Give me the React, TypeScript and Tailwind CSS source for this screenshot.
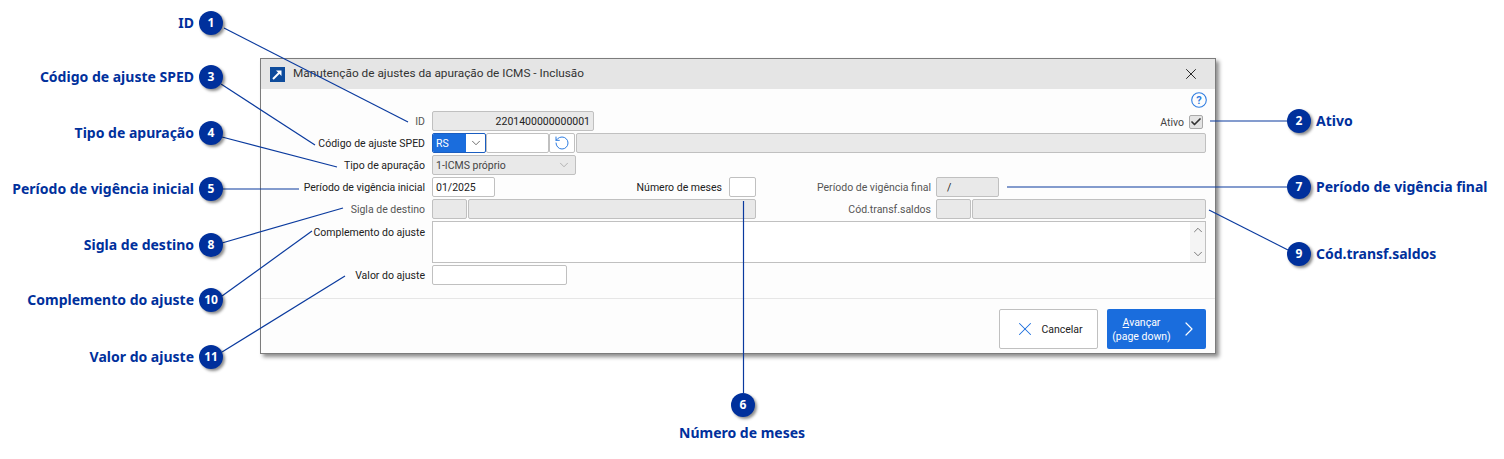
import React from "react";
import { ChevronDown, ChevronRight, ChevronUp, RotateCcw, X, Check } from "lucide-react";

// numbered callouts around the dialog
const callouts = [
  { n: 1, badge: "left-[199px] top-[11px]", text: "ID", label: "right-[1310px] top-[13px]" },
  { n: 3, badge: "left-[199px] top-[65px]", text: "Código de ajuste SPED", label: "right-[1310px] top-[67px]" },
  { n: 4, badge: "left-[199px] top-[121px]", text: "Tipo de apuração", label: "right-[1310px] top-[123px]" },
  { n: 5, badge: "left-[199px] top-[177px]", text: "Período de vigência inicial", label: "right-[1310px] top-[179px]" },
  { n: 8, badge: "left-[199px] top-[233px]", text: "Sigla de destino", label: "right-[1310px] top-[235px]" },
  { n: 10, badge: "left-[199px] top-[288px]", text: "Complemento do ajuste", label: "right-[1310px] top-[290px]" },
  { n: 11, badge: "left-[199px] top-[345px]", text: "Valor do ajuste", label: "right-[1310px] top-[347px]" },
  { n: 2, badge: "left-[1287px] top-[109px]", text: "Ativo", label: "left-[1316px] top-[111px]" },
  { n: 7, badge: "left-[1287px] top-[175px]", text: "Período de vigência final", label: "left-[1316px] top-[177px]" },
  { n: 9, badge: "left-[1287px] top-[242px]", text: "Cód.transf.saldos", label: "left-[1316px] top-[244px]" },
  { n: 6, badge: "left-[731px] top-[393px]", text: "Número de meses", label: "left-[679px] top-[423px]" },
];

const lines = [
  [224, 28, 408, 122],
  [221, 84, 315, 145],
  [222, 137, 337, 167],
  [222, 189, 299, 189],
  [222, 243, 343, 208],
  [222, 296, 312, 231],
  [222, 352, 345, 276],
  [1210, 121, 1287, 121],
  [1007, 187, 1287, 187],
  [1209, 210, 1288, 250],
  [743.5, 201, 743.5, 393],
];

const Label = ({ children, muted, className = "w-[160px] pt-[2px]" }: { children: React.ReactNode; muted?: boolean; className?: string }) => (
  <span className={`${className} shrink-0 text-right pr-[1px] ${muted ? "text-[#555]" : "text-[#222]"}`}>{children}</span>
);

const Field = ({ className = "", value, disabled }: { className?: string; value?: string; disabled?: boolean }) => (
  <div className={`h-5 shrink-0 rounded-[2px] border border-[#c0c0c0] px-[3px] pt-[2px] flex items-center text-[#222] ${disabled ? "bg-[#e9e9e9]" : "bg-white"} ${className}`}>
    {value}
  </div>
);

const Row = ({ children }: { children: React.ReactNode }) => <div className="flex h-5 items-center">{children}</div>;

export default function App() {
  return (
    <div className="relative h-[459px] w-[1504px] overflow-hidden bg-white font-['Noto_Sans',sans-serif]">
      <div className="absolute left-[260px] top-[58px] flex h-[296px] w-[956px] flex-col border border-[#7c7c7c] bg-[#fdfdfd] font-['Roboto',sans-serif] text-[10.5px] shadow-[3px_3px_4px_rgba(0,0,0,0.45)]">
        <div className="flex h-[30px] shrink-0 items-center bg-[#e5e5e5] pl-[9px] pr-[15px]">
          <svg width="15" height="15" viewBox="0 0 15 15" className="shrink-0">
            <rect width="15" height="15" fill="#0f4c9c" />
            <path d="M3 12 L10 5" stroke="#fff" strokeWidth="2" />
            <path d="M6 3.5 H11.5 V9 Z" fill="#fff" />
          </svg>
          <span className="ml-[8px] text-[11.8px] text-[#333]">Manutenção de ajustes da apuração de ICMS - Inclusão</span>
          <X className="ml-auto text-[#222]" size={18} strokeWidth={1.3} />
        </div>

        <div className="flex h-[22px] justify-end pr-[8px] pt-[3px]">
          <svg width="16" height="16" viewBox="0 0 16 16">
            <circle cx="8" cy="8" r="7.3" fill="none" stroke="#2f7de1" strokeWidth="1.1" />
            <text x="8" y="12" textAnchor="middle" fontSize="11" fontWeight="bold" fill="#2f7de1">?</text>
          </svg>
        </div>

        <div className="flex flex-col gap-[2px] pl-[5px] pr-[9px]">
          <Row>
            <Label muted>ID</Label>
            <Field disabled className="ml-[6px] w-[162px] justify-end" value="2201400000000001" />
            <span className="ml-auto pt-[4px] text-[#444]">Ativo</span>
            <div className="ml-[5px] mr-[3px] mt-[2px] flex h-[14px] w-[14px] items-center justify-center rounded-[2px] border border-[#aaa] bg-[#e4e4e4]">
              <Check size={12} strokeWidth={3.5} className="text-[#333]" />
            </div>
          </Row>
          <Row>
            <Label>Código de ajuste SPED</Label>
            <div className="ml-[6px] flex h-5 w-[54px] shrink-0 overflow-hidden rounded-[2px] border border-[#1a5dc0] bg-white">
              <span className="flex w-[33px] items-center bg-[#1a6ddd] pl-[3px] pt-[2px] text-white">RS</span>
              <span className="flex flex-1 items-center justify-center text-[#444]">
                <ChevronDown size={14} strokeWidth={1.3} />
              </span>
            </div>
            <Field className="w-[63px]" />
            <div className="flex h-5 w-[26px] shrink-0 items-center justify-center rounded-[2px] border border-[#c0c0c0] bg-white">
              <RotateCcw size={16} strokeWidth={1.5} className="text-[#2f7de1]" />
            </div>
            <Field disabled className="ml-[1px] flex-1" />
          </Row>
          <Row>
            <Label>Tipo de apuração</Label>
            <div className="ml-[6px] flex h-5 w-[144px] shrink-0 items-center justify-between rounded-[2px] border border-[#c0c0c0] bg-[#e9e9e9] px-[3px] text-[#444]">
              <span className="pt-[2px]">1-ICMS próprio</span>
              <ChevronDown size={14} strokeWidth={1.2} className="mr-[1px] text-[#999]" />
            </div>
          </Row>
          <Row>
            <Label>Período de vigência inicial</Label>
            <Field className="ml-[6px] w-[63px]" value="01/2025" />
            <Label className="w-[228px] pt-[2px]">Número de meses</Label>
            <Field className="ml-[6px] w-[27px]" />
            <Label muted className="w-[176px] pt-[2px]">Período de vigência final</Label>
            <Field disabled className="ml-[4px] w-[63px] pl-[10px]" value="/" />
          </Row>
          <Row>
            <Label muted>Sigla de destino</Label>
            <Field disabled className="ml-[6px] w-[35px]" />
            <Field disabled className="ml-[1px] w-[288px]" />
            <Label muted className="w-[176px] pt-[2px]">Cód.transf.saldos</Label>
            <Field disabled className="ml-[4px] w-[35px]" />
            <Field disabled className="ml-[1px] flex-1" />
          </Row>
          <div className="flex h-[42px]">
            <Label className="w-[160px] pt-[4px]">Complemento do ajuste</Label>
            <div className="ml-[6px] flex flex-1 justify-end border border-[#c0c0c0] bg-white">
              <div className="flex w-[15px] flex-col items-center justify-between bg-[#f4f4f4] py-[1px] text-[#555]">
                <ChevronUp size={14} strokeWidth={1.3} />
                <ChevronDown size={14} strokeWidth={1.3} />
              </div>
            </div>
          </div>
          <Row>
            <Label>Valor do ajuste</Label>
            <Field className="ml-[6px] w-[135px]" />
          </Row>
        </div>

        <div className="mt-[13px] flex flex-1 items-start justify-end gap-[9px] border-t border-[#e6e6e6] pr-[9px] pt-[10px]">
          <div className="flex h-10 w-[99px] items-center justify-center gap-[5px] rounded-[2px] border border-[#c0c0c0] bg-white text-[#222]">
            <X size={22} strokeWidth={1.1} className="text-[#1a6ddd]" />
            <span className="pt-[2px]">Cancelar</span>
          </div>
          <div className="flex h-10 w-[99px] items-center justify-center gap-[6px] rounded-[2px] bg-[#1a6ddd] text-white">
            <span className="pt-[2px] text-center leading-[14px]">
              <u>A</u>vançar
              <br />
              (page down)
            </span>
            <ChevronRight size={24} strokeWidth={1.2} />
          </div>
        </div>
      </div>

      <svg className="pointer-events-none absolute left-0 top-0" width="1504" height="459">
        {lines.map(([x1, y1, x2, y2], i) => (
          <line key={i} x1={x1} y1={y1} x2={x2} y2={y2} stroke="#0a3a9e" strokeWidth="1.2" />
        ))}
      </svg>

      {callouts.map((c) => (
        <React.Fragment key={c.n}>
          <div className={`absolute flex h-6 w-6 items-center justify-center rounded-full bg-[#00309c] text-[12px] font-bold text-white shadow-[2px_2px_3px_rgba(0,0,0,0.45)] ${c.badge}`}>
            {c.n}
          </div>
          <span className={`absolute whitespace-nowrap text-[14px] font-bold leading-[20px] text-[#00309c] ${c.label}`}>{c.text}</span>
        </React.Fragment>
      ))}
    </div>
  );
}
